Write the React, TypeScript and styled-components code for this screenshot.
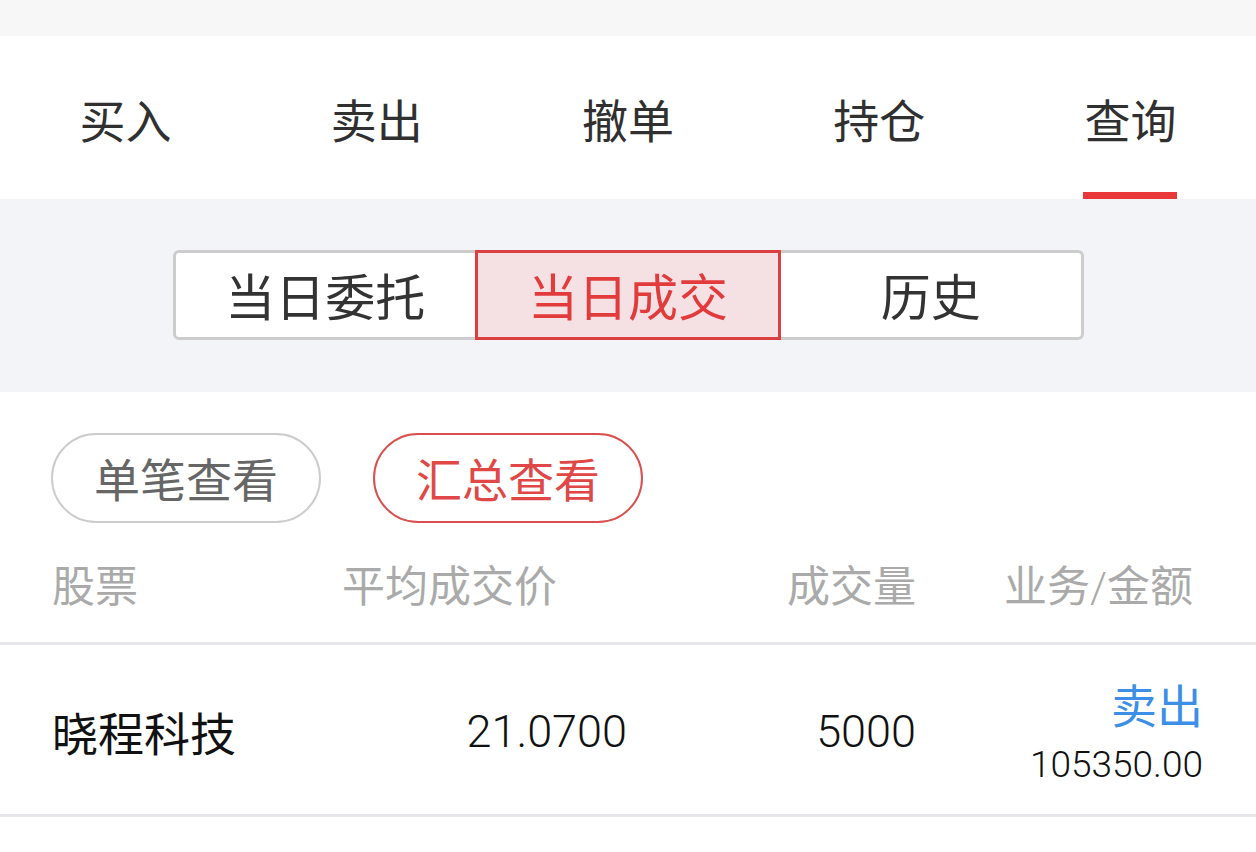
import React, { useState } from "react";
import styled, { createGlobalStyle } from "styled-components";

const GlobalStyle = createGlobalStyle`
  html, body { margin: 0; padding: 0; background: #ffffff; }
  body { font-family: Roboto, "Noto Sans CJK SC", sans-serif; }
  * { box-sizing: border-box; }
`;

const Page = styled.div`
  width: 1256px;
  min-height: 852px;
  background: #ffffff;
`;

const StatusStrip = styled.div`
  height: 36px;
  background: #f7f7f7;
`;

const TabBar = styled.nav`
  height: 163px;
  display: grid;
  grid-template-columns: repeat(5, 1fr);
  background: #ffffff;
`;

const Tab = styled.div`
  display: flex;
  flex-direction: column;
  align-items: center;
  padding-top: 59px;
`;

const TabLabel = styled.span`
  font-family: "Noto Sans CJK SC", sans-serif;
  font-size: 46px;
  line-height: 46px;
  color: #303030;
  font-weight: 400;
`;

const TabIndicator = styled.div<{ $active?: boolean }>`
  margin-top: auto;
  width: 94px;
  height: 7px;
  background: ${(p) => (p.$active ? "#e8383a" : "transparent")};
`;

const FilterBand = styled.section`
  height: 193px;
  background: #f3f4f8;
  padding-top: 51px;
`;

const Segmented = styled.div`
  width: 911px;
  height: 90px;
  margin: 0 auto;
  display: flex;
`;

const Segment = styled.div<{ $active?: boolean; $first?: boolean; $last?: boolean }>`
  flex: 1;
  display: flex;
  align-items: center;
  justify-content: center;
  margin-left: ${(p) => (p.$first ? "0" : "-3px")};
  border: 3px solid ${(p) => (p.$active ? "#d9403f" : "#cccccc")};
  border-radius: ${(p) => (p.$first ? "6px 0 0 6px" : p.$last ? "0 6px 6px 0" : "0")};
  background: ${(p) => (p.$active ? "#f5e1e4" : "#ffffff")};
  position: relative;
  z-index: ${(p) => (p.$active ? 1 : 0)};
  font-family: "Noto Sans CJK SC", sans-serif;
  font-size: 50px;
  color: ${(p) => (p.$active ? "#e23b3b" : "#333333")};
  padding-bottom: 2px;
`;

const PillRow = styled.div`
  display: flex;
  gap: 52px;
  padding: 41px 0 0 51px;
`;

const Pill = styled.div<{ $active?: boolean }>`
  width: 270px;
  height: 90px;
  border-radius: 45px;
  border: 2px solid ${(p) => (p.$active ? "#d9504f" : "#cccccc")};
  display: flex;
  align-items: center;
  justify-content: center;
  font-family: "Noto Sans CJK SC", sans-serif;
  font-size: 46px;
  color: ${(p) => (p.$active ? "#e04848" : "#666666")};
  padding-bottom: 2px;
`;

const Grid = styled.div`
  display: grid;
  grid-template-columns: 290px 285px 289px 1fr;
  padding: 0 53px 0 52px;
`;

const HeaderRow = styled(Grid)`
  height: 122px;
  padding-top: 38px;
  border-bottom: 3px solid #e6e6eb;
  align-items: start;
`;

const HeaderCell = styled.div<{ $align?: "left" | "right"; $pr?: number }>`
  font-family: "Noto Sans CJK SC", sans-serif;
  font-size: 43px;
  line-height: 44px;
  color: #aaaaaa;
  text-align: ${(p) => p.$align || "left"};
  padding-right: ${(p) => p.$pr || 0}px;
`;

const Slash = styled.span`
  font-family: Roboto, sans-serif;
  font-weight: 300;
  letter-spacing: -4px;
  margin-right: 4px;
`;

const DataRow = styled(Grid)`
  height: 172px;
  border-bottom: 3px solid #e6e6eb;
  align-items: center;
`;

const StockName = styled.div`
  font-family: "Noto Sans CJK SC", sans-serif;
  font-size: 46px;
  color: #111111;
  padding-top: 2px;
`;

const NumCell = styled.div`
  font-family: Roboto, sans-serif;
  font-size: 45px;
  font-weight: 300;
  color: #111111;
  text-align: right;
  padding-top: 4px;
`;

const Stack = styled.div`
  display: flex;
  flex-direction: column;
  align-items: flex-end;
  padding-top: 4px;
`;

const Side = styled.span`
  font-family: "Noto Sans CJK SC", sans-serif;
  font-size: 46px;
  line-height: 52px;
  color: #3c8ee6;
`;

const Amount = styled.span`
  font-family: Roboto, sans-serif;
  font-size: 37px;
  font-weight: 300;
  line-height: 44px;
  margin-top: 14px;
  color: #111111;
`;

const tabs = ["买入", "卖出", "撤单", "持仓", "查询"];
const segs = ["当日委托", "当日成交", "历史"];

export default function App() {
  const [tab, setTab] = useState(4);
  const [seg, setSeg] = useState(1);
  const [mode, setMode] = useState(1);
  return (
    <Page>
      <GlobalStyle />
      <StatusStrip />
      <TabBar>
        {tabs.map((t, i) => (
          <Tab key={t} onClick={() => setTab(i)}>
            <TabLabel>{t}</TabLabel>
            <TabIndicator $active={tab === i} />
          </Tab>
        ))}
      </TabBar>
      <FilterBand>
        <Segmented>
          {segs.map((s, i) => (
            <Segment
              key={s}
              $active={seg === i}
              $first={i === 0}
              $last={i === segs.length - 1}
              onClick={() => setSeg(i)}
            >
              {s}
            </Segment>
          ))}
        </Segmented>
      </FilterBand>
      <PillRow>
        <Pill $active={mode === 0} onClick={() => setMode(0)}>单笔查看</Pill>
        <Pill $active={mode === 1} onClick={() => setMode(1)}>汇总查看</Pill>
      </PillRow>
      <HeaderRow>
        <HeaderCell>股票</HeaderCell>
        <HeaderCell>平均成交价</HeaderCell>
        <HeaderCell $align="right">成交量</HeaderCell>
        <HeaderCell $align="right" $pr={10}>
          业务<Slash>/</Slash>金额
        </HeaderCell>
      </HeaderRow>
      <DataRow>
        <StockName>晓程科技</StockName>
        <NumCell>21.0700</NumCell>
        <NumCell>5000</NumCell>
        <Stack>
          <Side>卖出</Side>
          <Amount>105350.00</Amount>
        </Stack>
      </DataRow>
    </Page>
  );
}
